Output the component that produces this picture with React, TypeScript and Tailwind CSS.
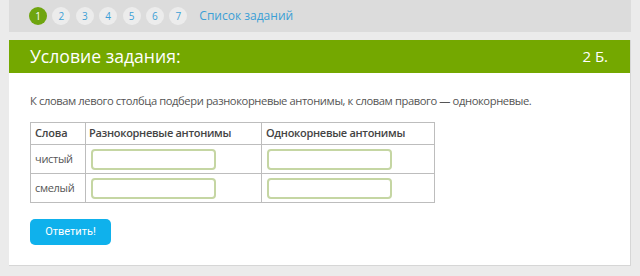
const pages = [1, 2, 3, 4, 5, 6, 7];

const rows = ["чистый", "смелый"];

export default function App() {
  return (
    <div className="h-[276px] w-[640px] overflow-hidden bg-[#ebebeb] font-['Open_Sans',sans-serif]">
      {/* task navigation */}
      <div className="ml-[9px] flex h-[32px] w-[622px] items-center bg-[#dcdcdc] pl-[20px]">
        <div className="flex items-center gap-[5.4px]">
          {pages.map((p) => (
            <span
              key={p}
              className={`flex h-[18px] w-[18px] items-center justify-center rounded-full text-[10px] ${p === 1 ? "bg-[#6fa50f] text-white" : "bg-[#ececec] text-[#3b9fd6]"}`}
            >
              {p}
            </span>
          ))}
        </div>
        <a className="ml-[12px] text-[12px] text-[#3b9fd6]">Список заданий</a>
      </div>

      {/* task card */}
      <div className="ml-[9px] mt-[8px] w-[622px] border-b border-r border-[#d6d6d6] bg-white">
        <div className="flex h-[33px] items-center justify-between bg-[#74a800] pl-[21px] pr-[22px] text-white">
          <span className="text-[17.6px]">Условие задания:</span>
          <span className="text-[15px]">2 Б.</span>
        </div>

        <div className="px-[21px] pb-[20px] pt-[19px]">
          <p className="whitespace-nowrap text-[11.2px] leading-[18px] tracking-[-0.4px] text-[#555]">
            К словам левого столбца подбери разнокорневые антонимы, к словам правого — однокорневые.
          </p>

          <table className="mt-[12px] border-collapse text-[11px] text-[#555]">
            <thead>
              <tr className="h-[22px] text-[#444]">
                <th className="w-[55px] border border-[#bdbdbd] px-[4px] text-left font-semibold tracking-[-0.2px]">Слова</th>
                <th className="w-[176px] border border-[#bdbdbd] px-[3px] text-left font-semibold tracking-[-0.3px]">Разнокорневые антонимы</th>
                <th className="w-[173px] border border-[#bdbdbd] px-[4px] text-left font-semibold tracking-[-0.3px]">Однокорневые антонимы</th>
              </tr>
            </thead>
            <tbody>
              {rows.map((w) => (
                <tr key={w} className="h-[29px]">
                  <td className="border border-[#bdbdbd] px-[4px] tracking-[-0.3px]">{w}</td>
                  <td className="border border-[#bdbdbd] px-[5px]">
                    <div className="h-[21px] w-[125px] rounded-[4px] border-2 border-[#c5d6a3]" />
                  </td>
                  <td className="border border-[#bdbdbd] px-[5px]">
                    <div className="h-[21px] w-[125px] rounded-[4px] border-2 border-[#c5d6a3]" />
                  </td>
                </tr>
              ))}
            </tbody>
          </table>

          <button className="mt-[16px] flex h-[26px] w-[81px] items-center justify-center rounded-[5px] bg-[#0fb1ec] font-['Roboto',sans-serif] text-[11px] text-white">
            Ответить!
          </button>
        </div>
      </div>
    </div>
  );
}
